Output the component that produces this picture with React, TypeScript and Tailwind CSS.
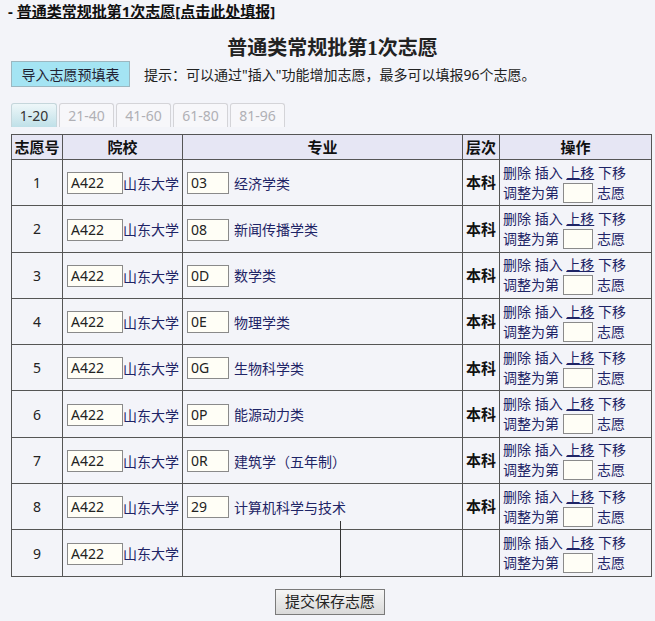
const FONT = "font-['Noto_Sans','Noto_Sans_CJK_SC',sans-serif]";

type Row = { no: number; code?: string; major?: string; level?: string };

const rows: Row[] = [
  { no: 1, code: "03", major: "经济学类", level: "本科" },
  { no: 2, code: "08", major: "新闻传播学类", level: "本科" },
  { no: 3, code: "0D", major: "数学类", level: "本科" },
  { no: 4, code: "0E", major: "物理学类", level: "本科" },
  { no: 5, code: "0G", major: "生物科学类", level: "本科" },
  { no: 6, code: "0P", major: "能源动力类", level: "本科" },
  { no: 7, code: "0R", major: "建筑学（五年制）", level: "本科" },
  { no: 8, code: "29", major: "计算机科学与技术", level: "本科" },
  { no: 9 },
];

const tabs = ["1-20", "21-40", "41-60", "61-80", "81-96"];

function Box({ value, w }: { value?: string; w: string }) {
  return (
    <span
      className={`inline-flex items-center h-[22px] ${w} border border-[#8a8a8a] bg-[#fffef6] pl-[3px] text-[14px] leading-none text-[#222] align-middle`}
    >
      {value}
    </span>
  );
}

export default function App() {
  return (
    <div className={`${FONT} w-[655px] h-[621px] bg-[#f3f4f9] text-[#111] overflow-hidden`}>
      <div className="pl-[8px] pt-[2px] text-[15px] leading-[19px]">
        <span className="font-bold">- </span>
        <span className="font-bold underline">普通类常规批第1次志愿[点击此处填报]</span>
      </div>

      <div className="mt-[15px] text-center text-[20px] leading-[23px] font-bold text-[#222] pl-[10px]">
        普通类常规批第<span className="font-['Liberation_Serif',serif] text-[21px]">1</span>次志愿
      </div>

      <div className="flex items-center mt-[1px] pl-[11px]">
        <div className="h-[26px] w-[119px] flex items-center justify-center bg-[#a4e4f3] border border-[#9cb7c0] text-[14px] text-[#223]">
          导入志愿预填表
        </div>
        <div className="ml-[14px] text-[14px] text-[#222]">
          提示：可以通过"插入"功能增加志愿，最多可以填报96个志愿。
        </div>
      </div>

      <div className="flex gap-[2px] pl-[11px] mt-[16px] h-[24px]">
        {tabs.map((t, i) => (
          <div
            key={t}
            className={`flex items-center justify-center rounded-t-[3px] border border-b-0 text-[14px] ${
              i === 0
                ? "w-[46px] bg-gradient-to-b from-[#eef7f9] to-[#bfe0e8] border-[#c5d6db] text-[#333]"
                : "w-[55px] bg-[#f7f7fa] border-[#d4d4d8] text-[#b0b0b5]"
            }`}
          >
            {t}
          </div>
        ))}
      </div>

      <div className="relative pl-[11px] mt-[7px]">
        <table className="w-[640px] border-collapse table-fixed border border-[#555] text-[14px]">
          <colgroup>
            <col className="w-[51px]" />
            <col className="w-[120px]" />
            <col className="w-[280px]" />
            <col className="w-[37px]" />
            <col className="w-[152px]" />
          </colgroup>
          <thead>
            <tr className="h-[25px] bg-[#e6e6f4] text-[15px] font-bold">
              <th className="border border-[#555] p-0 font-bold">志愿号</th>
              <th className="border border-[#555] p-0 font-bold">院校</th>
              <th className="border border-[#555] p-0 font-bold">专业</th>
              <th className="border border-[#555] p-0 font-bold">层次</th>
              <th className="border border-[#555] p-0 font-bold">操作</th>
            </tr>
          </thead>
          <tbody>
            {rows.map((r) => (
              <tr key={r.no} className="h-[46.3px]">
                <td className="border border-[#555] text-center text-[14px] text-[#222]">{r.no}</td>
                <td className="border border-[#555] pl-[4px] whitespace-nowrap">
                  <Box value="A422" w="w-[56px]" />
                  <span className="text-[#1e2466] align-middle">山东大学</span>
                </td>
                <td className="border border-[#555] pl-[4px] whitespace-nowrap">
                  {r.code && (
                    <>
                      <Box value={r.code} w="w-[42px]" />
                      <span className="ml-[5px] text-[#1e2466] align-middle">{r.major}</span>
                    </>
                  )}
                </td>
                <td className="border border-[#555] text-center font-bold text-[15px]">{r.level}</td>
                <td className="border border-[#555] pl-[3px] text-[#1e2466] leading-[20px] whitespace-nowrap">
                  <div>
                    删除 插入 <span className="underline">上移</span> 下移
                  </div>
                  <div className="flex items-center">
                    调整为第
                    <span className="mx-[4px] inline-block w-[30px] h-[20px] border border-[#8a8a8a] bg-[#fffef6]" />
                    志愿
                  </div>
                </td>
              </tr>
            ))}
          </tbody>
        </table>
        <div className="absolute left-[340px] top-[387px] w-[1px] h-[57px] bg-[#333]" />
      </div>

      <div className="flex justify-center mt-[12px] pl-[5px]">
        <div className="h-[26px] w-[110px] flex items-center justify-center border border-[#7a7a7a] bg-gradient-to-b from-[#f6f6f6] to-[#d9d9d9] text-[15px] text-[#222]">
          提交保存志愿
        </div>
      </div>
    </div>
  );
}
